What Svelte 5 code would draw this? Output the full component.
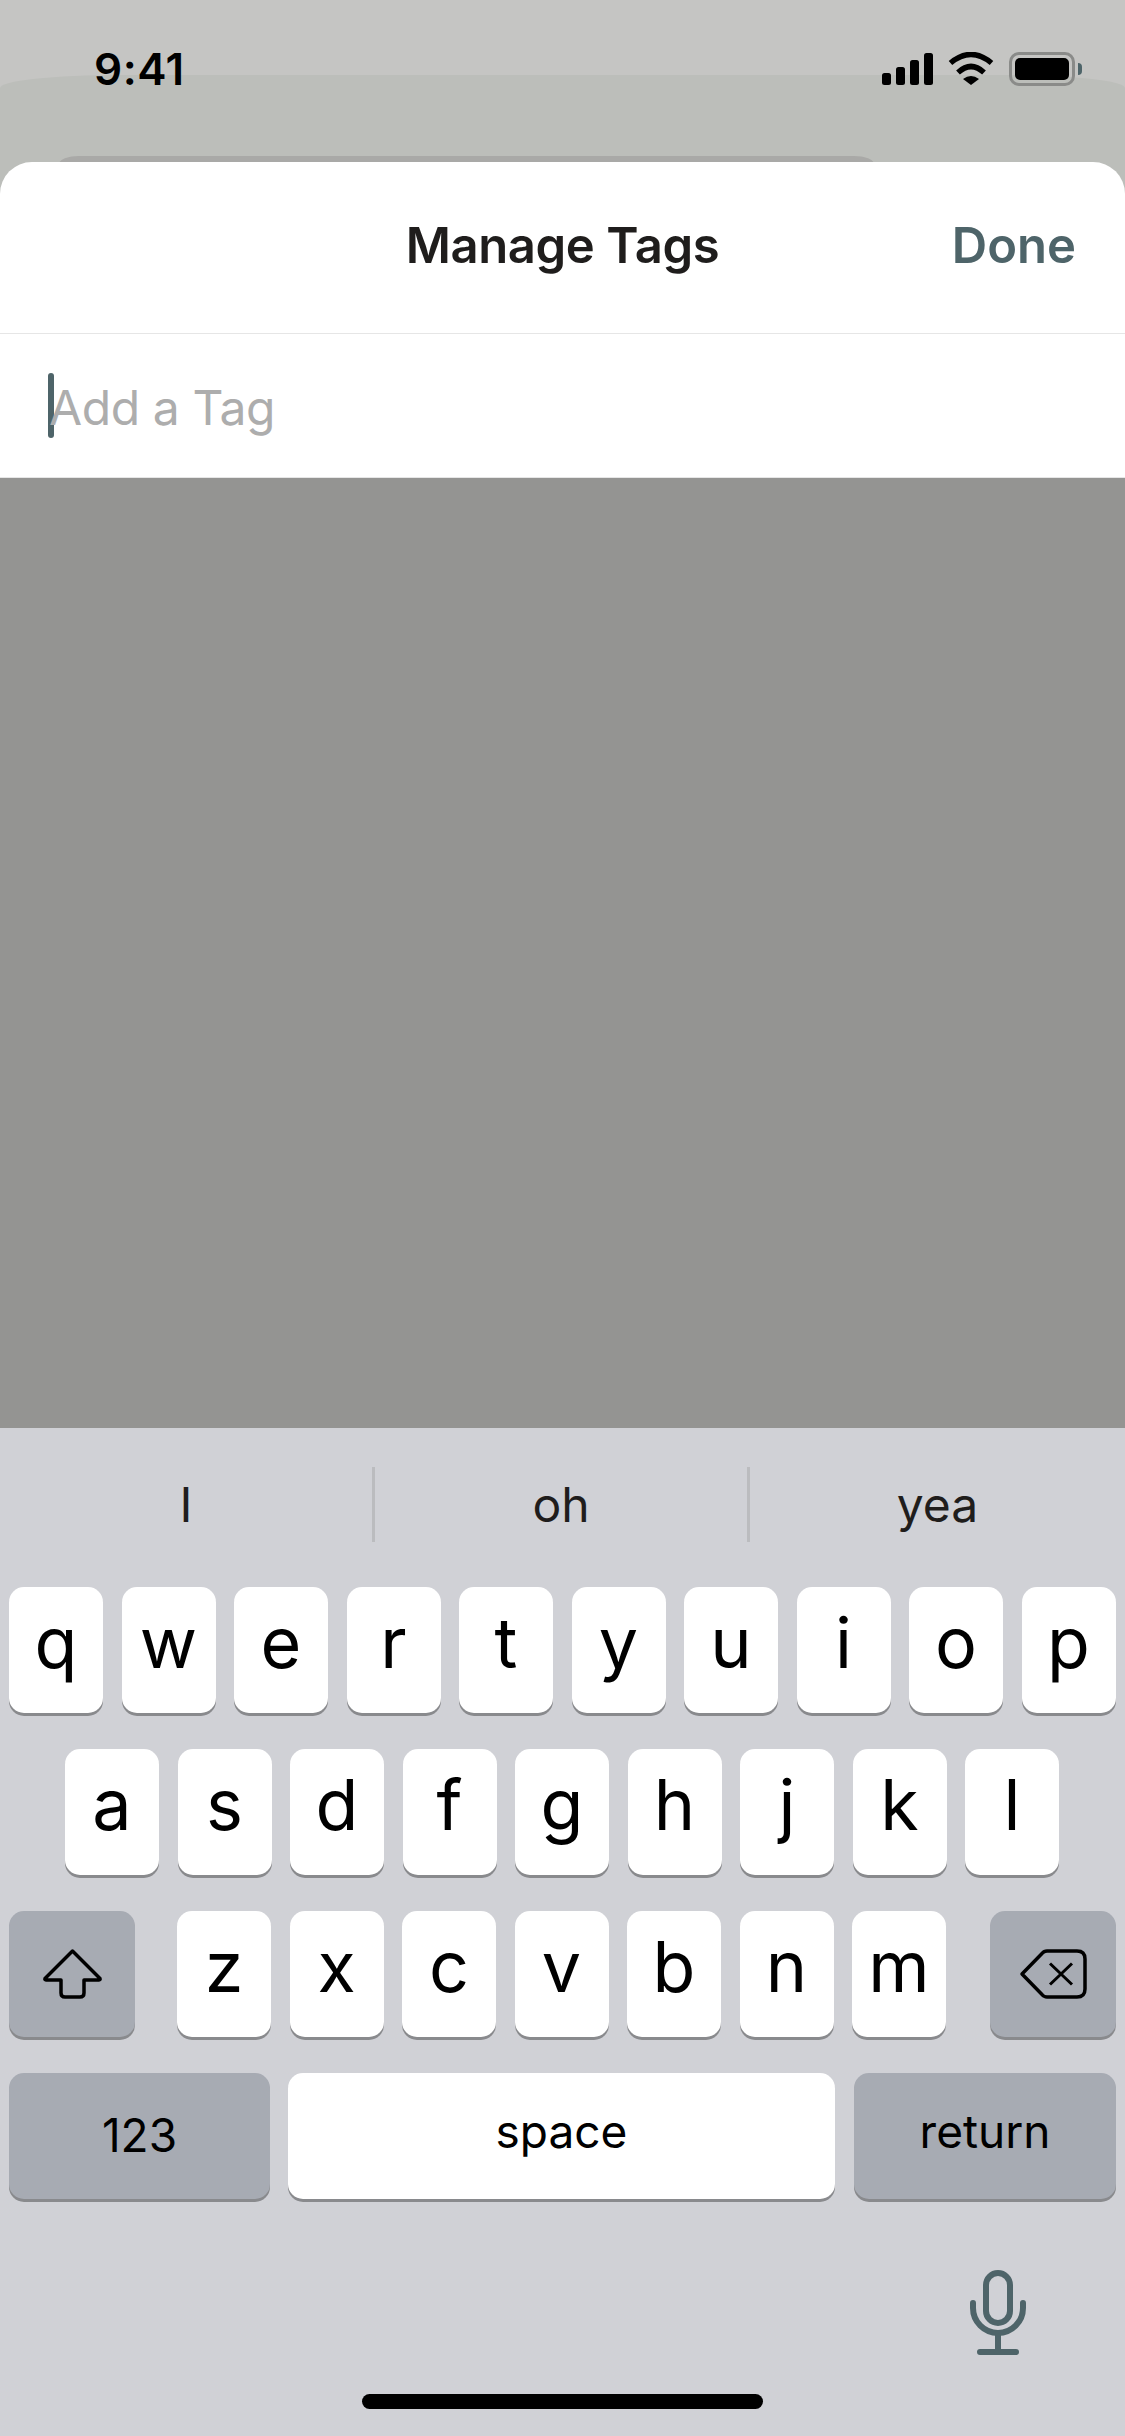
<script lang="ts">
    const suggestions = ['I', 'oh', 'yea'];
    const topRow = ['q', 'w', 'e', 'r', 't', 'y', 'u', 'i', 'o', 'p'];
    const midRow = ['a', 's', 'd', 'f', 'g', 'h', 'j', 'k', 'l'];
    const lowRow = ['z', 'x', 'c', 'v', 'b', 'n', 'm'];
    const signalBars = [
        { x: 0, h: 12 },
        { x: 14, h: 18 },
        { x: 28, h: 25 },
        { x: 42, h: 32 },
    ];
</script>

<div class="screen">
    <div class="backdrop">
        <div class="backdrop-layer"></div>
        <div class="backdrop-card"></div>
        <div class="status">
            <span class="time">9:41</span>
            <div class="status-icons">
                <svg width="51" height="32" viewBox="0 0 51 32" aria-hidden="true">
                    {#each signalBars as bar}
                        <rect x={bar.x} y={32 - bar.h} width="9" height={bar.h} rx="2.5" fill="#000" />
                    {/each}
                </svg>
                <svg width="46" height="33" viewBox="0 0 46 33" aria-hidden="true">
                    <path d="M2.5 11Q23 -6 43.5 11" fill="none" stroke="#000" stroke-width="5.5" />
                    <path d="M10 20.5Q23 8.5 36 20.5" fill="none" stroke="#000" stroke-width="5.5" />
                    <path d="M15 27Q23 21 31 27L23 33Z" fill="#000" />
                </svg>
                <div class="battery">
                    <div class="battery-body"><div class="battery-fill"></div></div>
                    <div class="battery-nub"></div>
                </div>
            </div>
        </div>
    </div>

    <div class="sheet">
        <header class="sheet-head">
            <span></span>
            <h1>Manage Tags</h1>
            <span class="done">Done</span>
        </header>
        <div class="tag-input">
            <span class="caret"></span>
            <span class="placeholder">Add a Tag</span>
        </div>
    </div>

    <div class="dimmed"></div>

    <div class="keyboard">
        <div class="suggestions">
            {#each suggestions as word}
                <div class="suggestion">{word}</div>
            {/each}
        </div>
        <div class="rows">
            <div class="row">
                {#each topRow as k}
                    <div class="key letter">{k}</div>
                {/each}
            </div>
            <div class="row centered">
                {#each midRow as k}
                    <div class="key letter">{k}</div>
                {/each}
            </div>
            <div class="row spread">
                <div class="key action side">
                    <svg width="61" height="52" viewBox="0 0 61 52" aria-hidden="true">
                        <path d="M30.5 3L58 30.5Q58.5 32 57 32H42V45Q42 49 38 49H23Q19 49 19 45V32H4Q2.500 32 3 30.500Z" fill="none" stroke="#000" stroke-width="3.500" stroke-linejoin="round" />
                    </svg>
                </div>
                <div class="letters">
                    {#each lowRow as k}
                        <div class="key letter">{k}</div>
                    {/each}
                </div>
                <div class="key action side">
                    <svg width="68" height="50" viewBox="0 0 68 50" aria-hidden="true">
                        <path d="M3 25L23 4.500Q25 2 28 2H58Q66 2 66 10V40Q66 48 58 48H28Q25 48 23 45.500Z" fill="none" stroke="#000" stroke-width="3.500" stroke-linejoin="round" />
                        <path d="M31 14.500L53 35.500M53 14.500L31 35.500" fill="none" stroke="#000" stroke-width="3" />
                    </svg>
                </div>
            </div>
            <div class="row bottom">
                <div class="key action wide">123</div>
                <div class="key word space">space</div>
                <div class="key action wide word">return</div>
            </div>
        </div>
        <div class="foot">
            <svg class="mic" width="56" height="85" viewBox="0 0 56 85" aria-hidden="true">
                <rect x="16" y="3" width="24" height="50" rx="12" fill="none" stroke="#4e6469" stroke-width="6" />
                <path d="M3 33V38A25 25 0 0 0 53 38V33M28 63V82M10 82H46" fill="none" stroke="#4e6469" stroke-width="6" stroke-linecap="round" />
            </svg>
            <div class="home-indicator"></div>
        </div>
    </div>
</div>

<style>
    :global(body) {
        margin: 0;
    }

    .screen {
        position: relative;
        width: 1125px;
        height: 2436px;
        display: flex;
        flex-direction: column;
        overflow: hidden;
        font-family: Inter, "Liberation Sans", sans-serif;
        color: #000;
        background: #bcbeba;
    }

    .backdrop {
        position: relative;
        height: 162px;
        flex: none;
        background: #c5c5c3;
        overflow: hidden;
    }

    .backdrop-layer {
        position: absolute;
        inset: 75px 0 -40px;
        background: #bcbeba;
        border-radius: 120px 120px 0 0 / 13px 13px 0 0;
    }

    .backdrop-card {
        position: absolute;
        left: 59px;
        right: 251px;
        top: 156px;
        height: 30px;
        background: #a9a9a7;
        border-radius: 20px 20px 0 0 / 8px 8px 0 0;
    }

    .status {
        position: relative;
        display: flex;
        justify-content: space-between;
        align-items: flex-start;
        padding: 52px 43px 0 94px;
    }

    .time {
        font-size: 44px;
        font-weight: 600;
        line-height: 34px;
        letter-spacing: 0.5px;
    }

    .status-icons {
        display: flex;
        align-items: flex-start;
        gap: 15px;
    }

    .status-icons svg:first-child {
        margin-top: 1px;
    }

    .battery {
        display: flex;
        align-items: center;
        gap: 3px;
        height: 34px;
    }

    .battery-body {
        box-sizing: border-box;
        width: 66px;
        height: 34px;
        padding: 3px;
        border: 3px solid #8a8b89;
        border-radius: 10px;
    }

    .battery-fill {
        height: 100%;
        background: #000;
        border-radius: 5px;
    }

    .battery-nub {
        width: 4px;
        height: 12px;
        background: #4e6469;
        border-radius: 0 4px 4px 0;
    }

    .sheet {
        position: relative;
        flex: none;
        background: #fff;
        border-radius: 32px 32px 0 0;
    }

    .sheet-head {
        display: grid;
        grid-template-columns: 1fr auto 1fr;
        align-items: center;
        height: 172px;
        padding: 0 49px 4px;
        box-sizing: border-box;
        border-bottom: 1px solid #e6e6e6;
    }

    h1 {
        margin: 0;
        font-size: 49px;
        font-weight: 600;
        color: #1f1d1c;
        letter-spacing: -0.4px;
    }

    .done {
        justify-self: end;
        font-size: 49px;
        font-weight: 600;
        color: #4e6469;
    }

    .tag-input {
        display: flex;
        align-items: center;
        height: 144px;
        padding-left: 48px;
        box-sizing: border-box;
        border-bottom: 1px solid #e6e6e6;
    }

    .caret {
        width: 6px;
        height: 65px;
        background: #4e6469;
        border-radius: 3px;
    }

    .placeholder {
        margin: 3px 0 0 -5px;
        font-size: 48px;
        color: #adadad;
        letter-spacing: -0.4px;
    }

    .dimmed {
        flex: 1;
        background: #949492;
    }

    .keyboard {
        flex: none;
        height: 1008px;
        display: flex;
        flex-direction: column;
        background: #d0d1d6;
    }

    .suggestions {
        display: grid;
        grid-template-columns: repeat(3, 1fr);
        height: 159px;
        padding-top: 39px;
        box-sizing: border-box;
    }

    .suggestion {
        display: flex;
        align-items: center;
        justify-content: center;
        height: 75px;
        font-size: 48px;
        color: #1f1d1c;
        border-right: 3px solid #bbbcbf;
    }

    .suggestion:last-child {
        border-right: none;
    }

    .rows {
        display: flex;
        flex-direction: column;
        gap: 36px;
        padding: 0 9px;
    }

    .row,
    .letters {
        display: flex;
        gap: 18.5px;
    }

    .row.centered {
        justify-content: center;
        padding-right: 1px;
    }

    .row.spread {
        justify-content: space-between;
    }

    .letters {
        margin-right: 2px;
    }

    .row.bottom {
        gap: 18px;
    }

    .key {
        flex: none;
        width: 94px;
        height: 126px;
        box-sizing: border-box;
        display: flex;
        align-items: center;
        justify-content: center;
        background: #fff;
        border-radius: 15px;
        box-shadow: 0 3px 0 #898a8d;
    }

    .letter {
        padding-bottom: 15px;
        font-size: 70px;
    }

    .action {
        background: #a7abb3;
    }

    .side {
        width: 126px;
    }

    .wide {
        width: 261px;
        padding-bottom: 2px;
        font-size: 46px;
    }

    .wide.word {
        width: 262px;
        margin-left: 1px;
        padding-bottom: 10px;
    }

    .space {
        flex: 1;
        flex-basis: 0;
        font-size: 46px;
    }

    .word {
        padding-bottom: 10px;
    }

    .foot {
        flex: 1;
        display: flex;
        flex-direction: column;
        padding-top: 71px;
    }

    .mic {
        align-self: flex-end;
        margin-right: 99px;
    }

    .home-indicator {
        align-self: center;
        width: 401px;
        height: 15px;
        margin-top: 39px;
        background: #000;
        border-radius: 8px;
    }
</style>
